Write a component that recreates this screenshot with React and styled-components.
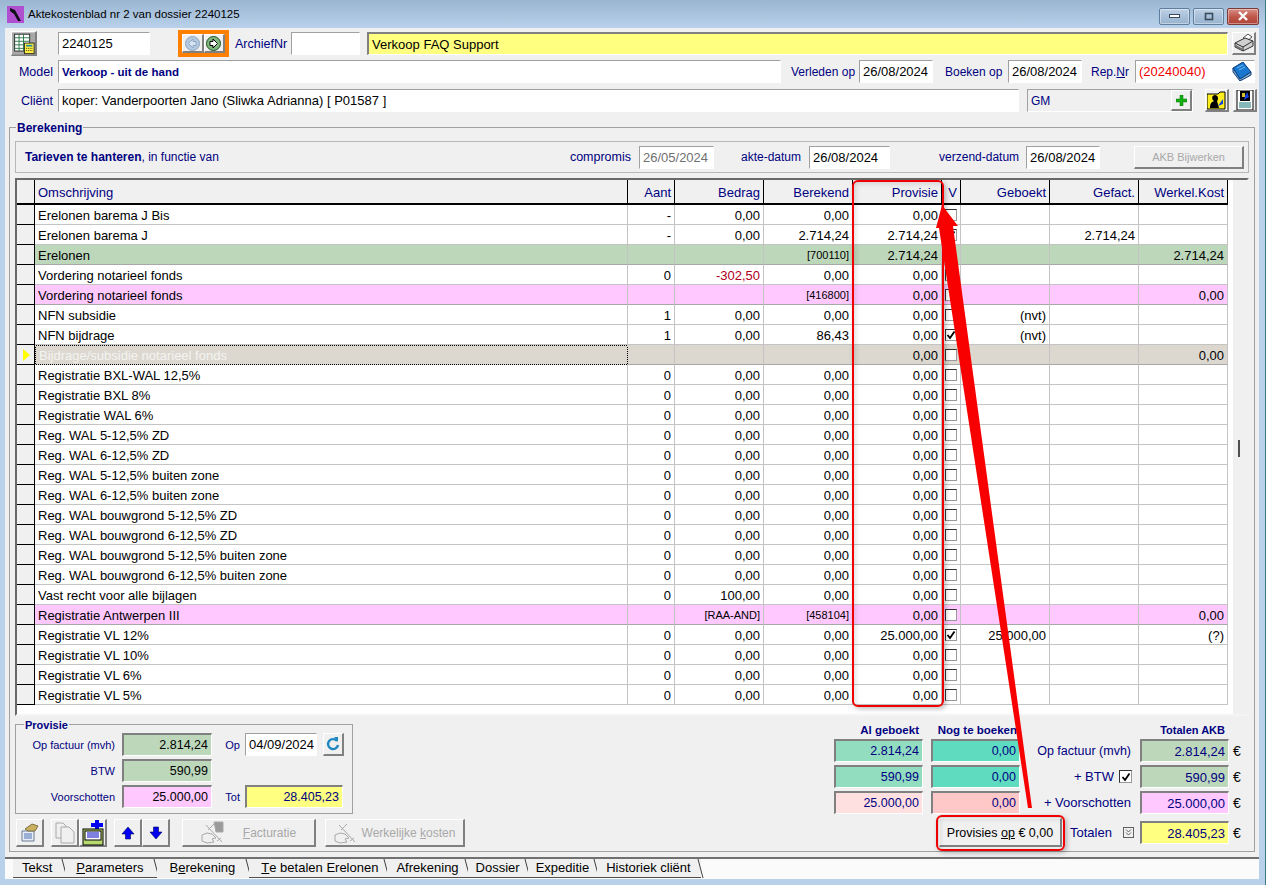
import React from 'react';
import styled, { createGlobalStyle } from 'styled-components';

const GlobalStyle = createGlobalStyle`
  html, body {
    margin: 0;
    padding: 0;
    background: #fff;
    font-family: "Liberation Sans", Arial, sans-serif;
    font-size: 12px;
    color: #000;
    overflow: hidden;
  }
  * { box-sizing: border-box; }
  u { text-underline-offset: 1px; }
`;

const navy = '#000080';
const raised = `
  background: #f0f0f0;
  border-style: solid;
  border-width: 1px 2px 2px 1px;
  border-color: #fff #808080 #808080 #fff;
`;

const Page = styled.div`
  position: relative;
  width: 1269px;
  height: 885px;
  overflow: hidden;
`;

const Window = styled.div`
  width: 1266px;
  height: 885px;
  display: flex;
  flex-direction: column;
  padding: 0 6px 6px 5px;
  background: #b9d1ea;
  border-right: 1px solid #3a7a80;
`;

const TitleBar = styled.div`
  height: 28px;
  flex: none;
  margin: 0 -6px 0 -5px;
  padding: 0 6px 0 7px;
  display: flex;
  align-items: center;
  gap: 4px;
  background: linear-gradient(#9bb6d2, #b9d1ea);
  color: #000;
  font-size: 11.5px;
`;

const TitleText = styled.span`
  flex: 1;
`;

const WinButton = styled.div`
  width: ${(p) => p.$w}px;
  height: 17px;
  display: flex;
  align-items: center;
  justify-content: center;
  border: 1px solid ${(p) => (p.$close ? '#7a3a36' : '#5f7f9f')};
  border-radius: 2px;
  background: ${(p) =>
    p.$close ? 'linear-gradient(#d89088, #c0584c 50%, #b04438)' : 'linear-gradient(#bfd2e6, #a8c0d9 50%, #9ab4cf)'};
  box-shadow: inset 0 0 0 1px rgba(255, 255, 255, 0.4);
`;

const WinControls = styled.div`
  display: flex;
  gap: 3px;
  margin-top: 4px;
`;

const Client = styled.div`
  flex: 1;
  display: flex;
  flex-direction: column;
  padding-top: 4px;
  background: #f0f0f0;
`;

const FormRow = styled.div`
  display: flex;
  align-items: center;
  height: 23px;
  flex: none;
  margin-top: ${(p) => p.$mt || 0}px;
  padding-left: ${(p) => p.$pl || 0}px;
`;

const Label = styled.span`
  flex: none;
  color: ${(p) => p.$color || navy};
  width: ${(p) => (p.$w ? `${p.$w}px` : 'auto')};
  margin-left: ${(p) => p.$ml || 0}px;
  text-align: ${(p) => p.$align || 'left'};
  font-weight: ${(p) => (p.$bold ? 700 : 400)};
  font-size: ${(p) => p.$size || 12}px;
  white-space: nowrap;
`;

const Field = styled.div`
  flex: none;
  width: ${(p) => p.$w}px;
  height: ${(p) => p.$h || 23}px;
  margin-left: ${(p) => p.$ml || 0}px;
  padding: 0 3px;
  display: flex;
  align-items: center;
  justify-content: ${(p) => (p.$right ? 'flex-end' : 'flex-start')};
  background: ${(p) => p.$bg || '#fff'};
  color: ${(p) => p.$color || '#000'};
  font-size: ${(p) => p.$size || 13}px;
  font-weight: ${(p) => (p.$bold ? 700 : 400)};
  border-style: solid;
  border-width: ${(p) => (p.$deep ? '2px 1px 1px 2px' : '1px')};
  border-color: ${(p) => (p.$deep ? '#808080 #fff #fff #808080' : '#a0a0a0 #fff #fff #a0a0a0')};
  white-space: nowrap;
`;

const IconButton = styled.button`
  ${raised}
  flex: none;
  width: ${(p) => p.$w || 24}px;
  height: ${(p) => p.$h || 23}px;
  margin-left: ${(p) => p.$ml || 0}px;
  padding: 0;
  display: flex;
  align-items: center;
  justify-content: center;
`;

const NavGroup = styled.div`
  flex: none;
  width: 51px;
  height: 27px;
  margin-left: 28px;
  display: flex;
  border: 4px solid #ff7f00;
  background: #f0f0f0;
`;

const NavButton = styled.button`
  ${raised}
  width: 21.5px;
  height: 19px;
  padding: 0;
  display: flex;
  align-items: center;
  justify-content: center;
`;

const Group = styled.div`
  flex: none;
  display: flex;
  flex-direction: column;
  margin: ${(p) => p.$m || 0};
  width: ${(p) => p.$w};
  height: ${(p) => p.$h}px;
  padding: ${(p) => p.$p || 0};
  border: 1px solid #a0a0a0;
`;

const Legend = styled.div`
  align-self: flex-start;
  height: 16px;
  line-height: 16px;
  margin: -8px 0 0 ${(p) => p.$ml}px;
  padding: 0 1px;
  background: #f0f0f0;
  color: ${navy};
  font-size: ${(p) => p.$size || 12}px;
  font-weight: 700;
`;

const TarievenPanel = styled.div`
  flex: none;
  height: 32px;
  margin-top: 5px;
  padding-left: 9px;
  display: flex;
  align-items: center;
  border: 1px solid #b8b8b8;
`;

const SoftButton = styled.button`
  ${raised}
  flex: none;
  width: ${(p) => p.$w}px;
  height: ${(p) => p.$h}px;
  margin-left: ${(p) => p.$ml || 0}px;
  padding: ${(p) => p.$pt || 0}px 0 0;
  display: flex;
  align-items: center;
  justify-content: center;
  gap: ${(p) => p.$gap || 0}px;
  font: ${(p) => p.$size || 12}px "Liberation Sans", Arial, sans-serif;
  color: ${(p) => (p.$off ? '#a8a8a8' : '#000')};
`;

const GridFrame = styled.div`
  flex: none;
  height: 538px;
  margin-top: 5px;
  display: flex;
  background: #fff;
  border-style: solid;
  border-width: 2px;
  border-color: #696969 #f4f4f4 #f4f4f4 #696969;
`;

const GridBody = styled.div`
  flex: none;
  width: 1211px;
  font-size: 13px;
`;

const GridRow = styled.div`
  display: grid;
  grid-template-columns: 18px 593px 47px 89px 89px 89px 19px 89px 89px 89px;
  height: ${(p) => (p.$head ? 25 : 20)}px;
`;

const Selector = styled.div`
  display: flex;
  align-items: center;
  padding-left: 6px;
  background: #f0f0f0;
  border-right: 1px solid #000;
  border-bottom: ${(p) => (p.$head ? 2 : 1)}px solid #000;
`;

const HeadCell = styled.div`
  display: flex;
  align-items: center;
  justify-content: ${(p) => (p.$left ? 'flex-start' : 'flex-end')};
  padding: 1px 3px 0;
  background: #f0f0f0;
  color: ${navy};
  border-right: 1px solid #000;
  border-bottom: 2px solid #000;
`;

const rowColors = { green: '#bdd7bb', pink: '#ffc8ff', gray: '#dcd8d0' };

const Cell = styled.div`
  display: flex;
  align-items: center;
  justify-content: ${(p) => (p.$left ? 'flex-start' : p.$center ? 'center' : 'flex-end')};
  padding: ${(p) => (p.$center ? 0 : '1px 3px 0')};
  background: ${(p) => rowColors[p.$kind] || '#fff'};
  color: ${(p) => p.$color || '#000'};
  font-size: ${(p) => (p.$code ? 11 : 13)}px;
  border-right: 1px solid #c4c4c4;
  border-bottom: 1px solid ${(p) => (p.$kind ? '#a8a8a8' : '#c4c4c4')};
  white-space: nowrap;
`;

const SelectedCell = styled(Cell)`
  color: #f4f4f0;
  border: 1px solid #000;
  outline: 1px dotted #dcd8d0;
  outline-offset: -1px;
`;

const Scrollbar = styled.div`
  flex: none;
  width: 16px;
  height: 534px;
  margin-left: 5px;
  background: #f0f0f0;
  padding: 260px 0 0 5px;
`;

const ScrollThumb = styled.div`
  width: 2px;
  height: 17px;
  background: #505050;
`;

const Pointer = styled.div`
  width: 0;
  height: 0;
  border-style: solid;
  border-width: 6px 0 6px 7px;
  border-color: transparent transparent transparent #ffff00;
`;

const Box = styled.span`
  flex: none;
  width: ${(p) => p.$s || 12}px;
  height: ${(p) => p.$s || 12}px;
  margin-left: ${(p) => p.$ml || 0}px;
  display: flex;
  align-items: center;
  justify-content: center;
  background: #fff;
  border: 1px solid #333;
  border-right-color: #999;
  border-bottom-color: #999;
`;

const Bottom = styled.div`
  flex: none;
  display: flex;
  justify-content: space-between;
  height: 134px;
`;

const LeftColumn = styled.div`
  width: 450px;
  display: flex;
  flex-direction: column;
`;

const Toolbar = styled.div`
  display: flex;
  margin-top: 5px;
`;

const RightColumn = styled.div`
  width: 415px;
  display: flex;
  flex-direction: column;
`;

const MoneyRow = styled.div`
  display: flex;
  align-items: center;
  height: ${(p) => p.$h || 23}px;
  margin-top: ${(p) => p.$mt || 0}px;
`;

const Euro = styled.span`
  margin-left: 4px;
  font-size: 14px;
`;

const TabBar = styled.div`
  flex: none;
  height: 22px;
  margin-top: 5px;
  padding-left: 8px;
  display: flex;
  background: #fbfbfb;
  border-top: 2px solid #707070;
`;

const Tab = styled.div`
  position: relative;
  height: 19px;
  padding: 0 ${(p) => p.$pr}px 2px ${(p) => p.$pl}px;
  display: flex;
  align-items: center;
  background: #f0f0f0;
  border-bottom: 1px solid ${(p) => (p.$active ? '#f0f0f0' : '#505050')};
  white-space: nowrap;
  font-size: 13px;

  &::after {
    content: '';
    position: absolute;
    top: 0;
    right: 0;
    width: 6px;
    height: 19px;
    border-right: 1px solid #404040;
    transform: skewX(15deg);
  }
`;

const Highlight = styled.div`
  position: absolute;
  left: ${(p) => p.$x}px;
  top: ${(p) => p.$y}px;
  width: ${(p) => p.$w}px;
  height: ${(p) => p.$h}px;
  border: 2px solid #f00000;
  border-radius: 6px;
  box-shadow: 2px 2px 5px rgba(0, 0, 0, 0.25), inset 2px 2px 5px rgba(0, 0, 0, 0.12);
  pointer-events: none;
`;

const ArrowLayer = styled.svg`
  position: absolute;
  left: 0;
  top: 0;
  pointer-events: none;
`;

const AppIcon = () => (
  <svg width="17" height="17" viewBox="0 0 17 17">
    <rect width="17" height="17" fill="#b050d0" />
    <path d="M3 2 L8 4 L14 15 L11 15 L7 8 L3 5 Z" fill="#101018" />
  </svg>
);

const CalcIcon = () => (
  <svg width="26" height="25" viewBox="0 0 26 25">
    <rect width="26" height="25" fill="#a8a8a8" />
    <rect x="3" y="2" width="17" height="19" fill="#fff" stroke="#202020" />
    <path d="M3 6 H20 M3 10 H20 M3 14 H20 M3 18 H20 M8 2 V21 M13 2 V21" stroke="#207040" strokeWidth="1" />
    <rect x="14" y="12" width="11" height="12" fill="#ffee40" stroke="#202020" />
    <rect x="16" y="14" width="7" height="2" fill="#2090a0" />
    <path d="M16 18 H23 M16 20.5 H23" stroke="#202020" strokeDasharray="1 1" />
  </svg>
);

const NavIcon = ({ next }) => (
  <svg width="15" height="15" viewBox="0 0 15 15">
    <circle cx="7.5" cy="7.5" r="7" fill={next ? '#7fb77f' : '#b4c8e0'} stroke={next ? '#205020' : '#8ea4c0'} />
    <path
      d={next ? 'M4 5.5 H7 V3 L11.5 7.5 L7 12 V9.5 H4 Z' : 'M11 5.5 H8 V3 L3.5 7.5 L8 12 V9.5 H11 Z'}
      fill={next ? '#fff' : '#d8e4f0'}
      stroke={next ? '#000' : '#90a8c8'}
    />
  </svg>
);

const PrinterIcon = () => (
  <svg width="20" height="19" viewBox="0 0 20 19">
    <path d="M9 4 L14 0 L18 3 L13 7 Z" fill="#fff" stroke="#505050" />
    <path d="M1 9 L11 4 L19 7 L19 12 L9 17 L1 13 Z" fill="#d0d0d0" stroke="#303030" />
    <path d="M1 9 L9 13 L19 7 M9 13 V17" fill="none" stroke="#303030" />
    <path d="M2 11 L8 14.5 V16.5 L2 13 Z" fill="#707070" />
  </svg>
);

const BookIcon = () => (
  <svg width="20" height="19" viewBox="0 0 20 19">
    <path d="M1 6 L11 0 L19 10 L8 17 Z" fill="#1878d0" stroke="#0a3a80" />
    <path d="M1 6 L1 10 L8 19 L19 13 L19 10 L8 17 Z" fill="#80b0c8" stroke="#0a3a80" />
    <path d="M5 6 L11 3 M7 8 L13 5" stroke="#70b8f0" />
  </svg>
);

const PlusIcon = () => (
  <svg width="11" height="11" viewBox="0 0 11 11">
    <path d="M4 0 H7 V4 H11 V7 H7 V11 H4 V7 H0 V4 H4 Z" fill="#10b010" stroke="#087008" strokeWidth="0.5" />
  </svg>
);

const FolderIcon = () => (
  <svg width="19" height="19" viewBox="0 0 19 19">
    <path d="M0 3 H11 L13 1 H18 V18 H0 Z" fill="#ffee20" stroke="#000" />
    <path d="M3 17 C3 12 5 11 7 10 C4 8 5 4 8 4 C11 4 12 8 10 10 L12 17 Z" fill="#000" />
    <path d="M16 8 L16 13 L11 15 L13 12 Z" fill="#1040e0" />
  </svg>
);

const FilmIcon = () => (
  <svg width="18" height="20" viewBox="0 0 18 20">
    <rect x="1" y="0" width="16" height="20" fill="#fff" stroke="#000" />
    <rect x="4" y="1" width="10" height="10" fill="#000" />
    <path d="M11 2 L13 7 L8 10 L9 6 Z" fill="#1040e0" />
    <path d="M6 3 h3 v4 h-3 Z" fill="#d8c030" />
    <path d="M3 13 H15 M3 15 H15 M3 17 H15" stroke="#107070" />
  </svg>
);

const RefreshIcon = () => (
  <svg width="14" height="16" viewBox="0 0 14 16">
    <path d="M11 5 A5 5 0 1 0 12 9" fill="none" stroke="#2088c0" strokeWidth="2.4" />
    <path d="M8 1 L12 1 L12 6 Z" fill="#2088c0" />
  </svg>
);

const PropsIcon = () => (
  <svg width="19" height="19" viewBox="0 0 19 19">
    <path d="M2 8 H14 V18 H2 Z" fill="#e8eef8" stroke="#6a7a90" />
    <path d="M4 11 H12 M4 13 H12 M4 15 H12" stroke="#4a70b0" />
    <path d="M5 6 L12 1 L18 3 L15 8 L8 8 Z" fill="#c8b060" stroke="#807040" />
  </svg>
);

const CopyIcon = () => (
  <svg width="20" height="22" viewBox="0 0 20 22">
    <path d="M1 1 H8 L11 4 V16 H1 Z" fill="#f0f0f0" stroke="#a8a8a8" />
    <path d="M6 5 H14 L19 10 V21 H6 Z" fill="#f0f0f0" stroke="#a8a8a8" />
  </svg>
);

const NewIcon = () => (
  <svg width="22" height="26" viewBox="0 0 22 26">
    <path d="M13 0 H17 V3 H21 V7 H17 V10 H13 V7 H9 V3 H13 Z" fill="#0000f0" />
    <rect x="1" y="9" width="20" height="16" fill="#b8d870" stroke="#000" />
    <rect x="3" y="11" width="16" height="9" fill="#fff" stroke="#000" />
    <path d="M5 13 H17 M5 15 H17 M5 17 H17" stroke="#0000c0" />
  </svg>
);

const MoveIcon = ({ up }) => (
  <svg width="14" height="14" viewBox="0 0 14 14">
    <path
      d={up ? 'M7 1 L13 8 H9.5 V13 H4.5 V8 H1 Z' : 'M7 13 L13 6 H9.5 V1 H4.5 V6 H1 Z'}
      fill="#0000f0"
      stroke="#000060"
      strokeWidth="0.6"
    />
  </svg>
);

const HandIcon = ({ paper }) => (
  <svg width="26" height="24" viewBox="0 0 26 24" fill="none" stroke="#a8a8a8">
    {paper && <path d="M13 1 H22 V11 H15 Z" fill="#9a9a9a" />}
    <path d="M1 14 L6 12 L11 13 L15 17 L11 18 L13 21 L6 22 L1 20 Z" fill="#f0f0f0" />
    <path d="M5 4 L21 21 M7 9 L13 3 M16 20 L20 17" />
  </svg>
);

const ChevronIcon = () => (
  <svg width="11" height="11" viewBox="0 0 11 11" fill="none" stroke="#606060">
    <rect x="0.5" y="0.5" width="10" height="10" />
    <path d="M3 2.5 L5.5 5 L8 2.5 M3 5.5 L5.5 8 L8 5.5" />
  </svg>
);

const Tick = () => (
  <svg width="10" height="10" viewBox="0 0 10 10">
    <path d="M1.5 5 L4 8 L8.5 1.5" fill="none" stroke="#000" strokeWidth="1.8" />
  </svg>
);

const zero = (name) => ({ name, aant: '0', bedrag: '0,00', berekend: '0,00', provisie: '0,00', v: 0 });

const rows = [
  { name: 'Erelonen barema J Bis', aant: '-', bedrag: '0,00', berekend: '0,00', provisie: '0,00', v: 0 },
  { name: 'Erelonen barema J', aant: '-', bedrag: '0,00', berekend: '2.714,24', provisie: '2.714,24', v: 1, gefact: '2.714,24' },
  { name: 'Erelonen', kind: 'green', code: '[700110]', provisie: '2.714,24', werkel: '2.714,24' },
  { name: 'Vordering notarieel fonds', aant: '0', bedrag: '-302,50', berekend: '0,00', provisie: '0,00', v: 0, neg: true },
  { name: 'Vordering notarieel fonds', kind: 'pink', code: '[416800]', provisie: '0,00', v: 0, werkel: '0,00' },
  { name: 'NFN subsidie', aant: '1', bedrag: '0,00', berekend: '0,00', provisie: '0,00', v: 0, geboekt: '(nvt)' },
  { name: 'NFN bijdrage', aant: '1', bedrag: '0,00', berekend: '86,43', provisie: '0,00', v: 1, geboekt: '(nvt)' },
  { name: 'Bijdrage/subsidie notarieel fonds', kind: 'gray', selected: true, provisie: '0,00', v: 0, werkel: '0,00' },
  zero('Registratie BXL-WAL 12,5%'),
  zero('Registratie BXL 8%'),
  zero('Registratie WAL 6%'),
  zero('Reg. WAL 5-12,5% ZD'),
  zero('Reg. WAL 6-12,5% ZD'),
  zero('Reg. WAL 5-12,5% buiten zone'),
  zero('Reg. WAL 6-12,5% buiten zone'),
  zero('Reg. WAL bouwgrond 5-12,5% ZD'),
  zero('Reg. WAL bouwgrond 6-12,5% ZD'),
  zero('Reg. WAL bouwgrond 5-12,5% buiten zone'),
  zero('Reg. WAL bouwgrond 6-12,5% buiten zone'),
  { ...zero('Vast recht voor alle bijlagen'), bedrag: '100,00' },
  { name: 'Registratie Antwerpen III', kind: 'pink', bedragCode: '[RAA-AND]', code: '[458104]', provisie: '0,00', v: 0, werkel: '0,00' },
  { ...zero('Registratie VL 12%'), provisie: '25.000,00', v: 1, geboekt: '25.000,00', werkel: '(?)' },
  zero('Registratie VL 10%'),
  zero('Registratie VL 6%'),
  zero('Registratie VL 5%'),
];

const heads = ['Aant', 'Bedrag', 'Berekend', 'Provisie', 'V', 'Geboekt', 'Gefact.', 'Werkel.Kost'];

const tabs = [
  { key: 'tekst', label: 'Tekst', pl: 9, pr: 13 },
  { key: 'param', label: <><u>P</u>arameters</>, pl: 11, pr: 13 },
  { key: 'berek', label: <>B<u>e</u>rekening</>, pl: 13, pr: 14, active: true },
  { key: 'erel', label: <><u>T</u>e betalen Erelonen</>, pl: 12, pr: 9 },
  { key: 'afrek', label: 'Afrekening', pl: 9, pr: 9 },
  { key: 'dossier', label: 'Dossier', pl: 8, pr: 8 },
  { key: 'exped', label: 'Expeditie', pl: 8, pr: 8 },
  { key: 'hist', label: 'Historiek cliënt', pl: 9, pr: 10 },
];

const GridLine = ({ row }) => {
  const NameCell = row.selected ? SelectedCell : Cell;
  return (
    <GridRow>
      <Selector>{row.selected && <Pointer />}</Selector>
      <NameCell $left $kind={row.kind}>{row.name}</NameCell>
      <Cell $kind={row.kind}>{row.aant}</Cell>
      <Cell $kind={row.kind} $code={!!row.bedragCode} $color={row.neg ? '#b00020' : undefined}>
        {row.bedragCode || row.bedrag}
      </Cell>
      <Cell $kind={row.kind} $code={!!row.code}>{row.code || row.berekend}</Cell>
      <Cell $kind={row.kind}>{row.provisie}</Cell>
      <Cell $kind={row.kind} $center>
        {row.v !== undefined && <Box>{row.v === 1 && <Tick />}</Box>}
      </Cell>
      <Cell $kind={row.kind}>{row.geboekt}</Cell>
      <Cell $kind={row.kind}>{row.gefact}</Cell>
      <Cell $kind={row.kind}>{row.werkel}</Cell>
    </GridRow>
  );
};

export default function App() {
  return (
    <Page>
      <GlobalStyle />
      <Window>
        <TitleBar>
          <AppIcon />
          <TitleText>Aktekostenblad nr 2 van dossier 2240125</TitleText>
          <WinControls>
            <WinButton $w={31}>
              <svg width="11" height="5"><rect x="0.5" y="0.5" width="10" height="3" fill="#fff" stroke="#3a4a5a" /></svg>
            </WinButton>
            <WinButton $w={31}>
              <svg width="10" height="9"><rect x="1.5" y="1.5" width="7" height="6" fill="none" stroke="#3a4a5a" strokeWidth="1.6" /></svg>
            </WinButton>
            <WinButton $w={32} $close>
              <svg width="12" height="10"><path d="M2 1 L10 9 M10 1 L2 9" stroke="#fff" strokeWidth="2.4" /></svg>
            </WinButton>
          </WinControls>
        </TitleBar>

        <Client>
          <FormRow $pl={6}>
            <IconButton as="div" $w={26} $h={25}><CalcIcon /></IconButton>
            <Field $w={92} $ml={21}>2240125</Field>
            <NavGroup>
              <NavButton><NavIcon /></NavButton>
              <NavButton><NavIcon next /></NavButton>
            </NavGroup>
            <Label $ml={6} $size={12.5}>ArchiefNr</Label>
            <Field $w={69} $ml={4} />
            <Field $w={861} $ml={7} $bg="#ffff80" $deep>Verkoop FAQ Support</Field>
            <IconButton $ml={4}><PrinterIcon /></IconButton>
          </FormRow>

          <FormRow $mt={5}>
            <Label $w={48} $align="right" $size={12.5}>Model</Label>
            <Field $w={723} $ml={5} $color={navy} $bold $size={11.5}>Verkoop - uit de hand</Field>
            <Label $w={64} $ml={10}>Verleden op</Label>
            <Field $w={74} $ml={4}>26/08/2024</Field>
            <Label $w={59} $ml={12}>Boeken op</Label>
            <Field $w={74} $ml={4}>26/08/2024</Field>
            <Label $w={38} $ml={9}>Rep.<u>N</u>r</Label>
            <Field $w={120} $ml={6} $color="#f00000">
              (20240040)
              <span style={{ marginLeft: 'auto', marginRight: -1, display: 'flex' }}><BookIcon /></span>
            </Field>
          </FormRow>

          <FormRow $mt={6}>
            <Label $w={48} $align="right" $size={12.5}>Cliënt</Label>
            <Field $w={961} $ml={5}>koper: Vanderpoorten Jano (Sliwka Adrianna) [ P01587 ]</Field>
            <Field $w={166} $ml={8} $bg="#f0f0f0" $color={navy} $size={12} style={{ paddingRight: 0 }}>
              GM
              <IconButton $w={21} $h={21} style={{ marginLeft: 'auto' }}><PlusIcon /></IconButton>
            </Field>
            <IconButton $ml={12}><FolderIcon /></IconButton>
            <IconButton $ml={4}><FilmIcon /></IconButton>
          </FormRow>

          <Group $m="15px 0 0 4px" $w="1246px" $h={725} $p="0 5px">
            <Legend $ml={1}>Berekening</Legend>
            <TarievenPanel>
              <Label $bold>Tarieven te hanteren</Label>
              <Label>, in functie van</Label>
              <Label $ml={351} $size={12.5}>compromis</Label>
              <Field $w={75} $ml={8} $color="#707070">26/05/2024</Field>
              <Label $ml={27}>akte-datum</Label>
              <Field $w={81} $ml={8}>26/08/2024</Field>
              <Label $ml={49}>verzend-datum</Label>
              <Field $w={74} $ml={7}>26/08/2024</Field>
              <SoftButton $w={110} $h={23} $ml={34} $off $size={11}>AKB Bijwerken</SoftButton>
            </TarievenPanel>

            <GridFrame>
              <GridBody>
                <GridRow $head>
                  <Selector $head />
                  <HeadCell $left>Omschrijving</HeadCell>
                  {heads.map((h) => <HeadCell key={h}>{h}</HeadCell>)}
                </GridRow>
                {rows.map((row, i) => <GridLine key={i} row={row} />)}
              </GridBody>
              <Scrollbar><ScrollThumb /></Scrollbar>
            </GridFrame>

            <Bottom>
              <LeftColumn>
                <Group $m="8px 0 0" $w="338px" $h={90}>
                  <Legend $ml={8} $size={11}>Provisie</Legend>
                  <FormRow>
                    <Label $w={99} $align="right" $size={11}>Op factuur (mvh)</Label>
                    <Field $w={90} $ml={7} $bg="#bdd7bb" $deep $right $size={12.5}>2.814,24</Field>
                    <Label $w={28} $align="right" $size={11}>Op</Label>
                    <Field $w={72} $ml={5}>04/09/2024</Field>
                    <IconButton $w={21} $ml={6}><RefreshIcon /></IconButton>
                  </FormRow>
                  <FormRow $mt={3}>
                    <Label $w={99} $align="right" $size={11}>BTW</Label>
                    <Field $w={90} $ml={7} $bg="#bdd7bb" $deep $right $size={12.5}>590,99</Field>
                  </FormRow>
                  <FormRow $mt={3}>
                    <Label $w={99} $align="right" $size={11}>Voorschotten</Label>
                    <Field $w={90} $ml={7} $bg="#ffc8ff" $deep $right $size={12.5}>25.000,00</Field>
                    <Label $w={28} $align="right" $size={11}>Tot</Label>
                    <Field $w={98} $ml={5} $bg="#ffff80" $color={navy} $deep $right $size={12.5}>28.405,23</Field>
                  </FormRow>
                </Group>
                <Toolbar>
                  <IconButton $w={28} $h={28} $ml={1}><PropsIcon /></IconButton>
                  <IconButton $w={28} $h={28} $ml={7}><CopyIcon /></IconButton>
                  <IconButton $w={28} $h={28}><NewIcon /></IconButton>
                  <IconButton $w={28} $h={28} $ml={7}><MoveIcon up /></IconButton>
                  <IconButton $w={28} $h={28}><MoveIcon /></IconButton>
                  <SoftButton $w={134} $h={28} $ml={12} $off $gap={16}>
                    <HandIcon paper />
                    <span><u>F</u>acturatie</span>
                  </SoftButton>
                  <SoftButton $w={140} $h={28} $ml={9} $off $gap={2}>
                    <HandIcon />
                    <span>Werkelijke <u>k</u>osten</span>
                  </SoftButton>
                </Toolbar>
              </LeftColumn>

              <RightColumn>
                <MoneyRow $h={18} $mt={5}>
                  <Label $w={85} $align="right" $bold $size={11.5}>Al geboekt</Label>
                  <Label $w={98} $align="right" $bold $size={11.5}>Nog te boeken</Label>
                  <Label $w={208} $align="right" $bold $size={11}>Totalen AKB</Label>
                </MoneyRow>
                <MoneyRow>
                  <Field $w={89} $bg="#92dcc0" $color={navy} $deep $right $size={12.5}>2.814,24</Field>
                  <Field $w={89} $ml={8} $bg="#5fdcc0" $color={navy} $deep $right $size={12.5}>0,00</Field>
                  <Label $w={111} $align="right" $size={12.5}>Op factuur (mvh)</Label>
                  <Field $w={89} $ml={9} $bg="#bdd7bb" $color={navy} $deep $right>2.814,24</Field>
                  <Euro>€</Euro>
                </MoneyRow>
                <MoneyRow $mt={3}>
                  <Field $w={89} $bg="#92dcc0" $color={navy} $deep $right $size={12.5}>590,99</Field>
                  <Field $w={89} $ml={8} $bg="#5fdcc0" $color={navy} $deep $right $size={12.5}>0,00</Field>
                  <Label $w={94} $align="right" $size={13}>+ BTW</Label>
                  <Box $s={13} $ml={5}><Tick /></Box>
                  <Field $w={89} $ml={8} $bg="#bdd7bb" $color={navy} $deep $right>590,99</Field>
                  <Euro>€</Euro>
                </MoneyRow>
                <MoneyRow $mt={3}>
                  <Field $w={89} $bg="#ffe0e0" $color={navy} $deep $right $size={12.5}>25.000,00</Field>
                  <Field $w={89} $ml={8} $bg="#ffc8c8" $color={navy} $deep $right $size={12.5}>0,00</Field>
                  <Label $w={111} $align="right" $size={13}>+ Voorschotten</Label>
                  <Field $w={89} $ml={9} $bg="#ffc8ff" $color={navy} $deep $right>25.000,00</Field>
                  <Euro>€</Euro>
                </MoneyRow>
                <MoneyRow $h={29} $mt={4}>
                  <SoftButton $w={123} $h={29} $ml={105} $size={12.5} $pt={2}>
                    <span>Provisies <u>op</u> € 0,00</span>
                  </SoftButton>
                  <Label $ml={8} $w={53} $size={13}>Totalen</Label>
                  <ChevronIcon />
                  <Field $w={89} $ml={6} $bg="#ffff80" $color={navy} $deep $right>28.405,23</Field>
                  <Euro>€</Euro>
                </MoneyRow>
              </RightColumn>
            </Bottom>
          </Group>

          <TabBar>
            {tabs.map((t) => (
              <Tab key={t.key} $pl={t.pl} $pr={t.pr} $active={t.active}>{t.label}</Tab>
            ))}
          </TabBar>
        </Client>
      </Window>

      <Highlight $x={852} $y={180} $w={92} $h={527} />
      <Highlight $x={936} $y={815} $w={129} $h={36} />
      <ArrowLayer width="1269" height="885" viewBox="0 0 1269 885">
        <polygon points="942,205 958,226 953,226 1032,808 1028,808 939,228 936,228" fill="#f80000" />
      </ArrowLayer>
    </Page>
  );
}
